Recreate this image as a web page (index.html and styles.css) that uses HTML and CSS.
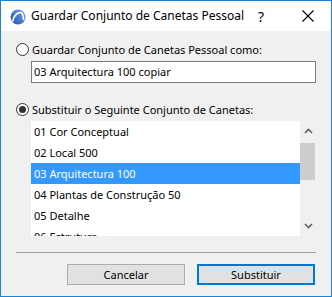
FILE: index.html
```html
<!DOCTYPE html>
<html lang="pt">
<head>
<meta charset="utf-8">
<title>Guardar Conjunto de Canetas Pessoal</title>
<link rel="stylesheet" href="styles.css">
</head>
<body>
<div class="window">
  <div class="titlebar">
    <svg class="app-icon" width="16" height="16" viewBox="0 0 16 16">
      <defs>
        <linearGradient id="g" x1="0" y1="1" x2="1" y2="0">
          <stop offset="0" stop-color="#1a4fb0"/>
          <stop offset="1" stop-color="#79a6ec"/>
        </linearGradient>
      </defs>
      <circle cx="8" cy="8" r="7.5" fill="url(#g)"/>
      <path d="M2.5 12.5 C4 6 8 3 10.5 3.5 C12.5 4 13.5 7 13.5 11" fill="none" stroke="#fff" stroke-width="1.6"/>
    </svg>
    <span class="title">Guardar Conjunto de Canetas Pessoal</span>
    <span class="help">?</span>
    <svg class="close" width="12" height="12" viewBox="0 0 12 12">
      <path d="M0.5 0.5 L11.5 11.5 M11.5 0.5 L0.5 11.5" stroke="#000" stroke-width="1.1"/>
    </svg>
  </div>
  <div class="content">
    <label class="radio-row first">
      <span class="radio"></span>
      <span>Guardar Conjunto de Canetas Pessoal como:</span>
    </label>
    <div class="textbox">03 Arquitectura 100 copiar</div>
    <label class="radio-row second">
      <span class="radio checked"></span>
      <span>Substituir o Seguinte Conjunto de Canetas:</span>
    </label>
    <div class="listbox">
      <div class="items">
        <div class="item">01 Cor Conceptual</div>
        <div class="item">02 Local 500</div>
        <div class="item selected">03 Arquitectura 100</div>
        <div class="item">04 Plantas de Construção 50</div>
        <div class="item">05 Detalhe</div>
        <div class="item">06 Estrutura</div>
      </div>
      <div class="scrollbar">
        <svg class="arrow" width="9" height="6" viewBox="0 0 9 6"><path d="M1 5 L4.5 1.5 L8 5" fill="none" stroke="#606060" stroke-width="1.6"/></svg>
        <div class="track"><div class="thumb"></div></div>
        <svg class="arrow" width="9" height="6" viewBox="0 0 9 6"><path d="M1 1 L4.5 4.5 L8 1" fill="none" stroke="#606060" stroke-width="1.6"/></svg>
      </div>
    </div>
    <div class="separator"></div>
    <div class="buttons">
      <button class="btn">Cancelar</button>
      <button class="btn default">Substituir</button>
    </div>
  </div>
</div>
</body>
</html>
```
FILE: styles.css
```css
html, body {
  margin: 0;
  padding: 0;
}
body {
  font-family: "Noto Sans", "Liberation Sans", sans-serif;
  font-size: 12px;
  color: #000;
  background: #f0f0f0;
}
.window {
  width: 330px;
  height: 295px;
  border: 1px solid #1883d7;
  background: #f0f0f0;
  display: flex;
  flex-direction: column;
}
.titlebar {
  height: 30px;
  background: #fff;
  display: flex;
  align-items: center;
}
.app-icon {
  margin-left: 9px;
  margin-top: 1px;
}
.title {
  margin-left: 5px;
  flex: 1;
  line-height: 16px;
}
.help {
  font-size: 14px;
  width: 14px;
  margin-right: 30px;
}
.close {
  margin-right: 17px;
}
.content {
  padding: 0 15px;
  display: flex;
  flex-direction: column;
  font-size: 11px;
}
.radio-row {
  display: flex;
  align-items: center;
  height: 16px;
  gap: 3px;
}
.radio-row.first { margin-top: 10px; }
.radio-row.second { margin-top: 18px; }
.radio {
  width: 11px;
  height: 11px;
  border: 1px solid #333;
  border-radius: 50%;
  background: #fff;
  display: flex;
  align-items: center;
  justify-content: center;
}
.radio.checked::after {
  content: "";
  width: 7px;
  height: 7px;
  border-radius: 50%;
  background: #333;
}
.textbox {
  margin-top: 4px;
  margin-left: 15px;
  height: 20px;
  border: 1px solid #7a7a7a;
  background: #fff;
  line-height: 20px;
  padding-left: 2px;
}
.listbox {
  margin-top: 4px;
  margin-left: 15px;
  height: 115px;
  display: flex;
}
.items {
  flex: 1;
  background: #fff;
  overflow: hidden;
}
.item {
  height: 21px;
  line-height: 21px;
  padding-left: 3px;
  white-space: nowrap;
}
.item.selected {
  background: #3399ff;
  color: #fff;
}
.scrollbar {
  width: 16px;
  display: flex;
  flex-direction: column;
  align-items: center;
}
.scrollbar .arrow {
  margin: 7px 0 5px;
}
.scrollbar .arrow:last-child {
  margin: 5px 0 7px;
}
.track {
  flex: 1;
  width: 100%;
}
.thumb {
  margin-top: 4px;
  height: 37px;
  width: 15px;
  background: #cdcdcd;
}
.separator {
  margin-top: 16px;
  height: 1px;
  background: #a0a0a0;
}
.buttons {
  margin-top: 11px;
  display: flex;
  justify-content: flex-end;
  gap: 12px;
  padding-right: 1px;
}
.btn {
  font: inherit;
  width: 118px;
  height: 21px;
  background: #e1e1e1;
  border: 1px solid #adadad;
  padding: 0;
  color: #000;
}
.btn.default {
  border: 2px solid #0078d7;
}
```
